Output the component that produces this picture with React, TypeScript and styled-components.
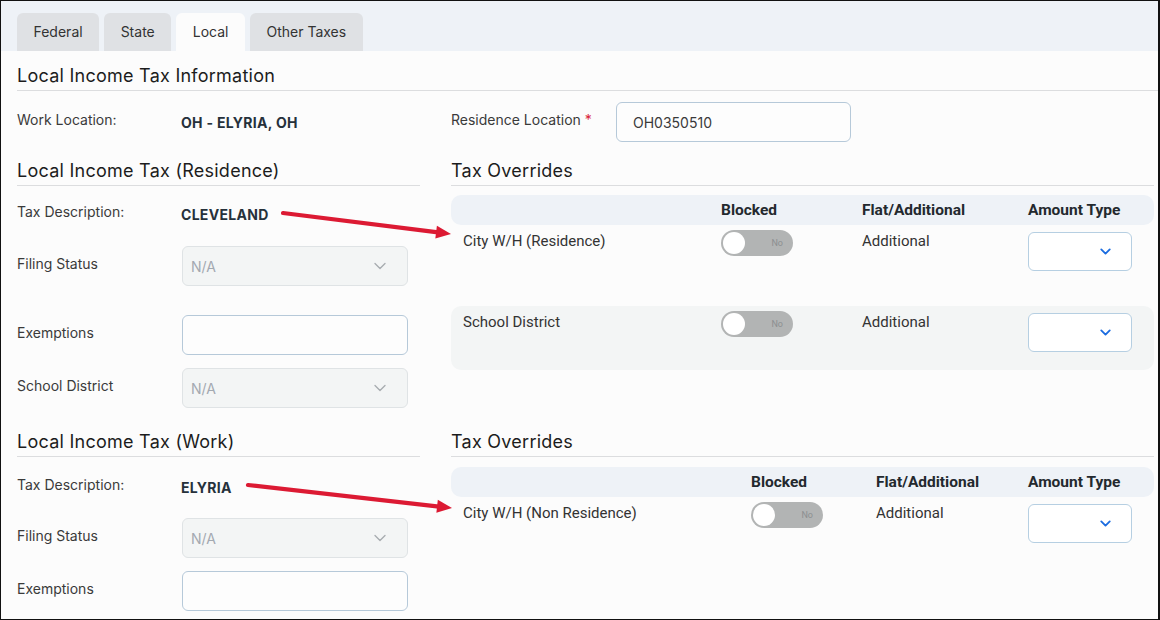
import React from 'react';
import styled, { createGlobalStyle } from 'styled-components';
import { ChevronDown } from 'lucide-react';

const GlobalStyle = createGlobalStyle`
  html, body {
    margin: 0;
    padding: 0;
    background: #fcfcfc;
  }
  * {
    box-sizing: border-box;
  }
`;

interface OverrideRow {
  label: string;
  kind: string;
  striped?: boolean;
}

const residenceRows: OverrideRow[] = [
  { label: 'City W/H (Residence)', kind: 'Additional' },
  { label: 'School District', kind: 'Additional', striped: true },
];

const workRows: OverrideRow[] = [{ label: 'City W/H (Non Residence)', kind: 'Additional' }];

const Toggle = () => (
  <ToggleTrack>
    <ToggleKnob />
    <ToggleText>No</ToggleText>
  </ToggleTrack>
);

const AmountSelect = () => (
  <SmallSelect>
    <ChevronDown size={17} strokeWidth={2.6} color="#1b6ce0" />
  </SmallSelect>
);

const OverridesTable = ({ rows, columns, top }: { rows: OverrideRow[]; columns: string; top: number }) => (
  <div>
    <TableHead $columns={columns} $top={top}>
      <span />
      <HeadCell>Blocked</HeadCell>
      <HeadCell>Flat/Additional</HeadCell>
      <HeadCell>Amount Type</HeadCell>
    </TableHead>
    {rows.map((r) => (
      <TableRow key={r.label} $columns={columns} $striped={r.striped}>
        <Cell>{r.label}</Cell>
        <Toggle />
        <Cell>{r.kind}</Cell>
        <AmountSelect />
      </TableRow>
    ))}
  </div>
);

const DisabledSelect = () => (
  <GraySelect>
    <span>N/A</span>
    <ChevronDown size={20} strokeWidth={1.6} color="#a7acb0" />
  </GraySelect>
);

const App: React.FC = () => (
  <Frame>
    <GlobalStyle />
    <TabBar>
      <Tab>Federal</Tab>
      <Tab>State</Tab>
      <Tab $active>Local</Tab>
      <Tab>Other Taxes</Tab>
    </TabBar>

    <Content>
      <Heading $top={13}>Local Income Tax Information</Heading>
      <TopRow>
        <FieldRow $mt={0}>
          <Label>Work Location:</Label>
          <Value>OH - ELYRIA, OH</Value>
        </FieldRow>
        <FieldRow $mt={0}>
          <Label>
            Residence Location <Req>*</Req>
          </Label>
          <TextInput value="OH0350510" readOnly $w={235} />
        </FieldRow>
      </TopRow>

      <Columns>
        <div>
          <Heading $top={17}>Local Income Tax (Residence)</Heading>
          <FieldRow $mt={18} $h={20}>
            <Label>Tax Description:</Label>
            <Value>CLEVELAND</Value>
          </FieldRow>
          <FieldRow $mt={22}>
            <Label>Filing Status</Label>
            <DisabledSelect />
          </FieldRow>
          <FieldRow $mt={29}>
            <Label>Exemptions</Label>
            <TextInput readOnly />
          </FieldRow>
          <FieldRow $mt={13}>
            <Label>School District</Label>
            <DisabledSelect />
          </FieldRow>
        </div>
        <div>
          <Heading $top={17}>Tax Overrides</Heading>
          <OverridesTable rows={residenceRows} columns="258px 141px 166px 1fr" top={9} />
        </div>

        <div>
          <Heading $top={22}>Local Income Tax (Work)</Heading>
          <FieldRow $mt={20} $h={20}>
            <Label>Tax Description:</Label>
            <Value>ELYRIA</Value>
          </FieldRow>
          <FieldRow $mt={21}>
            <Label>Filing Status</Label>
            <DisabledSelect />
          </FieldRow>
          <FieldRow $mt={13}>
            <Label>Exemptions</Label>
            <TextInput readOnly />
          </FieldRow>
        </div>
        <div>
          <Heading $top={22}>Tax Overrides</Heading>
          <OverridesTable rows={workRows} columns="288px 125px 152px 1fr" top={10} />
        </div>
      </Columns>
    </Content>

    <Arrows width="1160" height="620" viewBox="0 0 1160 620">
      <Arrow x1={283} y1={213} x2={451} y2={234} />
      <Arrow x1={248} y1={485} x2={452} y2={508} />
    </Arrows>
  </Frame>
);

const Arrow = ({ x1, y1, x2, y2 }: { x1: number; y1: number; x2: number; y2: number }) => {
  const a = Math.atan2(y2 - y1, x2 - x1);
  const len = 15;
  const half = 6.5;
  const bx = x2 - len * Math.cos(a);
  const by = y2 - len * Math.sin(a);
  const px = -Math.sin(a) * half;
  const py = Math.cos(a) * half;
  return (
    <g>
      <line x1={x1} y1={y1} x2={bx + 2 * Math.cos(a)} y2={by + 2 * Math.sin(a)} stroke="#dc1a33" strokeWidth={4.2} strokeLinecap="round" />
      <polygon points={`${x2},${y2} ${bx + px},${by + py} ${bx - px},${by - py}`} fill="#dc1a33" />
    </g>
  );
};

export default App;

const Frame = styled.div`
  position: relative;
  width: 1160px;
  height: 620px;
  border: 1px solid #111;
  border-right-width: 2px;
  background: #fcfcfc;
  overflow: hidden;
  font-family: Inter, 'Noto Sans', sans-serif;
  color: #333;
`;

const TabBar = styled.div`
  display: flex;
  align-items: flex-end;
  gap: 5px;
  height: 50px;
  padding-left: 16px;
  background: #eef2f7;
`;

const Tab = styled.div<{ $active?: boolean }>`
  height: 38px;
  padding: 0 16.5px 1px;
  display: flex;
  align-items: center;
  border-radius: 6px 6px 0 0;
  font-size: 14px;
  color: #333;
  background: ${(p) => (p.$active ? '#fcfcfc' : '#dfe1e4')};
`;

const Content = styled.div`
  padding-left: 16px;
`;

const Heading = styled.div<{ $top: number }>`
  margin-top: ${(p) => p.$top}px;
  padding-bottom: 2px;
  border-bottom: 1px solid #dcdddf;
  font-size: 18px;
  line-height: 24px;
  letter-spacing: 0.25px;
  color: #1c1c1c;
`;

const TopRow = styled.div`
  display: grid;
  grid-template-columns: 434px 1fr;
  margin-top: 11px;
`;

const Columns = styled.div`
  display: grid;
  grid-template-columns: 403px 703px;
  column-gap: 31px;
  align-items: start;
`;

const FieldRow = styled.div<{ $mt: number; $h?: number }>`
  display: flex;
  align-items: center;
  margin-top: ${(p) => p.$mt}px;
  height: ${(p) => p.$h ?? 40}px;
`;

const Label = styled.div`
  width: 164px;
  flex-shrink: 0;
  font-size: 14px;
  color: #3a3a3a;
  padding-bottom: 5px;
`;

const Req = styled.span`
  color: #d9263b;
`;

const Value = styled.div`
  font-size: 14px;
  font-weight: 700;
  letter-spacing: 0.3px;
  color: #26313b;
`;

const TextInput = styled.input<{ $w?: number }>`
  width: ${(p) => p.$w ?? 226}px;
  height: 40px;
  margin-left: 1px;
  border: 1px solid #b6c9d9;
  border-radius: 6px;
  background: #fdfdfd;
  padding: 0 16px;
  font-family: Inter, sans-serif;
  font-size: 14px;
  color: #3a3a3a;
  outline: none;
`;

const GraySelect = styled.div`
  width: 226px;
  height: 40px;
  margin-left: 1px;
  display: flex;
  align-items: center;
  justify-content: space-between;
  padding: 0 17px 0 8px;
  border: 1px solid #dfe3e5;
  border-radius: 6px;
  background: #f3f5f5;
  font-size: 14px;
  color: #a3a9b1;
`;

const TableHead = styled.div<{ $columns: string; $top: number }>`
  display: grid;
  grid-template-columns: ${(p) => p.$columns};
  align-items: center;
  height: 30px;
  margin-top: ${(p) => p.$top}px;
  padding: 0 12px;
  border-radius: 10px;
  background: #eef2f7;
`;

const HeadCell = styled.div`
  font-family: Roboto, Inter, sans-serif;
  font-size: 15.5px;
  font-weight: 700;
  color: #23292e;
`;

const TableRow = styled.div<{ $columns: string; $striped?: boolean }>`
  display: grid;
  grid-template-columns: ${(p) => p.$columns};
  align-items: start;
  height: 64px;
  margin-top: ${(p) => (p.$striped ? 17 : 0)}px;
  padding: 5px 12px;
  border-radius: 10px;
  background: ${(p) => (p.$striped ? '#f3f5f5' : 'transparent')};
`;

const Cell = styled.div`
  padding-top: 3px;
  font-family: Roboto, Inter, sans-serif;
  font-size: 15px;
  line-height: 17px;
  color: #333;
`;

const ToggleTrack = styled.div`
  position: relative;
  width: 72px;
  height: 26px;
  border-radius: 13px;
  background: #b2b4b4;
  display: flex;
  align-items: center;
  justify-content: flex-end;
  padding-right: 10px;
`;

const ToggleKnob = styled.div`
  position: absolute;
  left: 2px;
  top: 2px;
  width: 22px;
  height: 22px;
  border-radius: 50%;
  background: #fff;
`;

const ToggleText = styled.span`
  font-family: Roboto, sans-serif;
  font-size: 9px;
  color: #8c8f91;
`;

const SmallSelect = styled.div`
  width: 104px;
  height: 39px;
  margin-top: 2px;
  display: flex;
  align-items: center;
  justify-content: flex-end;
  padding-right: 17px;
  border: 1px solid #b6cfe2;
  border-radius: 6px;
  background: #fff;
`;

const Arrows = styled.svg`
  position: absolute;
  left: -1px;
  top: -1px;
  pointer-events: none;
`;
